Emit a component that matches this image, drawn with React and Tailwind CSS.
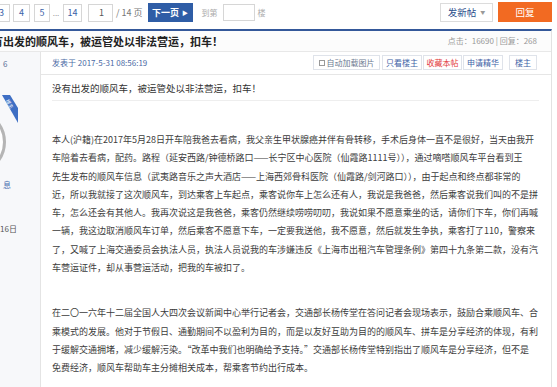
import React from "react";

const FONT = { fontFamily: "'Noto Sans CJK SC', 'Noto Sans', sans-serif" };

const para1 = [
  "本人(沪籍)在2017年5月28日开车陪我爸去看病，我父亲生甲状腺癌并伴有骨转移，手术后身体一直不是很好，当天由我开",
  "车陪着去看病，配药。路程（延安西路/钟德桥路口——长宁区中心医院（仙霞路1111号）），通过嘀嗒顺风车平台看到王",
  "先生发布的顺风车信息（武夷路音乐之声大酒店——上海西郊骨科医院（仙霞路/剑河路口）），由于起点和终点都非常的",
  "近，所以我就接了这次顺风车，到达乘客上车起点，乘客说你车上怎么还有人，我说是我爸爸，然后乘客说我们叫的不是拼",
  "车，怎么还会有其他人。我再次说这是我爸爸，乘客仍然继续唠唠叨叨，我说如果不愿意乘坐的话，请你们下车，你们再喊",
  "一辆，我这边取消顺风车订单，然后乘客不愿意下车，一定要我送他，我不愿意，然后就发生争执，乘客打了110，警察来",
  "了，又喊了上海交通委员会执法人员，执法人员说我的车涉嫌违反《上海市出租汽车管理条例》第四十九条第二款，没有汽",
  "车营运证件，却从事营运活动，把我的车被扣了。",
];

const para2 = [
  "在二〇一六年十二届全国人大四次会议新闻中心举行记者会，交通部长杨传堂在答问记者会现场表示，鼓励合乘顺风车、合",
  "乘模式的发展。他对于节假日、通勤期间不以盈利为目的，而是以友好互助为目的的顺风车、拼车是分享经济的体现，有利",
  "于缓解交通拥堵，减少缓解污染。“改革中我们也明确给予支持。”交通部长杨传堂特别指出了顺风车是分享经济，但不是",
  "免费经济，顺风车帮助车主分摊相关成本，帮乘客节约出行成本。",
];

/* Pager box: small bordered square with a blue number */
const PageBox = ({ children, className }) => (
  <span
    className={
      "h-[18px] border border-[#d6d6d6] bg-white text-[#3a62a8] text-[9px] flex items-center justify-center " +
      className
    }
  >
    {children}
  </span>
);

const ToolBtn = ({ children, className }) => (
  <span
    className={
      "h-[15px] border border-[#dfe3ea] bg-white text-[8px] flex items-center justify-center " +
      className
    }
  >
    {children}
  </span>
);

const App = () => {
  return (
    <div
      className="w-[557px] h-[387px] overflow-hidden bg-white text-[#333]"
      style={FONT}
    >
      {/* Top bar: pager + actions */}
      <div className="h-[29px] flex items-start pt-[3px]">
        <div className="flex items-center -ml-[7px]">
          <PageBox className="w-[17px]">3</PageBox>
          <PageBox className="w-[17px] ml-[3px]">4</PageBox>
          <PageBox className="w-[16px] ml-[4px]">5</PageBox>
          <span className="w-[10px] ml-[1px] text-[8px] text-[#999] text-center">...</span>
          <PageBox className="w-[19px] ml-[2px]">14</PageBox>
          <span className="w-[25px] h-[18px] ml-[6px] border border-[#d6d6d6] text-[9px] text-[#555] flex items-center justify-end pr-[8px]">
            1
          </span>
          <span className="ml-[3px] text-[9px] text-[#777] whitespace-nowrap">/ 14 页</span>
          <span className="w-[45px] h-[19px] ml-[5px] bg-[#2f5da6] text-white text-[9px] font-bold flex items-center justify-center gap-[3px]">
            下一页
            <span className="text-[6px]">▶</span>
          </span>
          <span className="ml-[9px] text-[8px] text-[#aaa]">到第</span>
          <span className="w-[32px] h-[17px] ml-[5px] border border-[#d6d6d6]" />
          <span className="ml-[3px] text-[8px] text-[#aaa]">楼</span>
        </div>
        <div className="ml-auto mr-[5px] flex items-center -mt-px">
          <span className="w-[53px] h-[19px] border border-[#dcdcdc] bg-white text-[#2a4e8c] text-[9.5px] flex items-center justify-center gap-[4px]">
            发新帖
            <span className="text-[5px] text-[#999]">▼</span>
          </span>
          <span className="w-[54px] h-[20px] ml-[5px] bg-[#f26a22] text-white text-[9.5px] flex items-center justify-center">
            回复
          </span>
        </div>
      </div>

      {/* Thread box */}
      <div className="w-[552px] h-[358px] border-t-2 border-[#34589a] border-r border-r-[#e2e2e2] flex flex-col">
        {/* Title row */}
        <div className="h-[21px] shrink-0 bg-[#fcfcfc] border-b border-[#e8e8e8] flex items-center">
          <h1 className="-ml-[19px] text-[11px] font-bold text-[#222] whitespace-nowrap">
            没有出发的顺风车，被运管处以非法营运，扣车！
          </h1>
          <span className="ml-auto mr-[14px] text-[8px] text-[#999] whitespace-nowrap">
            点击：16690 | 回复：268
          </span>
        </div>

        {/* Post row */}
        <div className="flex flex-1">
          {/* Author column */}
          <div className="relative w-[41px] shrink-0 bg-[#f7f8fa] border-r border-[#e4e4e4] overflow-hidden flex flex-col">
            <div className="h-[23px] flex items-center pl-[3px] text-[8px] text-[#5a6f96]">6</div>
            <div className="mt-[34px] -ml-[60px] w-[66px] h-[66px] rounded-full border-[3px] border-[#b5b5b5] bg-white" />
            <svg
              className="absolute left-[2px] top-[43px]"
              width="16"
              height="28"
              viewBox="0 0 16 28"
            >
              <polygon points="0,0 8,0 16,13 16,28" fill="#3e6fc4" />
            </svg>
            <span className="absolute left-[5px] top-[48px] text-[5px] text-white rotate-[58deg]">楼主</span>
            <div className="mt-[5px] pl-[3px] text-[8px] text-[#4a6fb0] leading-[10px]">息</div>
            <div className="mt-[34px] pl-0 text-[8px] text-[#555] leading-[10px]">16日</div>
          </div>

          {/* Post body */}
          <div className="flex-1 flex flex-col">
            <div className="h-[23px] shrink-0 border-b border-[#e6e6e6] flex items-center pl-[11px] pr-[14px]">
              <span className="text-[8px] text-[#4b6aa5] whitespace-nowrap">
                发表于 2017-5-31 08:56:19
              </span>
              <div className="ml-auto flex items-center -mt-px">
                <ToolBtn className="w-[67px] text-[#6c7a90] gap-[2px]">
                  <span className="w-[6px] h-[6px] border border-[#999] bg-white" />
                  自动加载图片
                </ToolBtn>
                <ToolBtn className="w-[40px] ml-[2px] text-[#3d62a6]">只看楼主</ToolBtn>
                <ToolBtn className="w-[39px] ml-[1px] text-[#e23a3a]">收藏本帖</ToolBtn>
                <ToolBtn className="w-[40px] ml-[1px] text-[#3d62a6]">申请精华</ToolBtn>
                <ToolBtn className="w-[28px] ml-[6px] text-[#3d62a6]">楼主</ToolBtn>
              </div>
            </div>

            <div className="ml-[11px] mr-[12px] pt-[6px] pb-[5px] border-b border-[#eeeeee]">
              <p className="text-[9.5px] leading-[14px] text-[#333] whitespace-nowrap">
                没有出发的顺风车，被运管处以非法营运，扣车！
              </p>
            </div>

            <div className="ml-[11px] mt-[30px] text-[9px] leading-[18.3px] text-[#3c3c3c] whitespace-nowrap">
              {para1.map((line, i) => (
                <div key={i}>{line}</div>
              ))}
            </div>
            <div className="ml-[11px] mt-[27px] text-[9px] leading-[18.2px] text-[#3c3c3c] whitespace-nowrap">
              {para2.map((line, i) => (
                <div key={i}>{line}</div>
              ))}
            </div>
          </div>
        </div>
      </div>
    </div>
  );
};

export default App;
